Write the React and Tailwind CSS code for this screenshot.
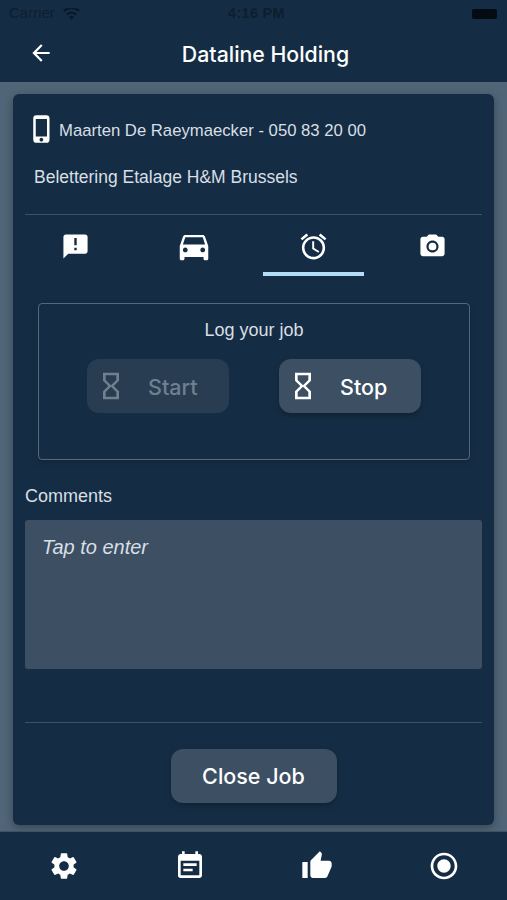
import { MdArrowBack, MdPhoneIphone, MdAnnouncement, MdDirectionsCar, MdAccessAlarm, MdPhotoCamera, MdHourglassEmpty, MdSettings, MdEventNote, MdThumbUp, MdRadioButtonChecked } from 'react-icons/md';

const tabs = [
  { Icon: MdAnnouncement, size: 29 },
  { Icon: MdDirectionsCar, size: 38 },
  { Icon: MdAccessAlarm, size: 31, active: true },
  { Icon: MdPhotoCamera, size: 29 },
];

const navItems = [MdSettings, MdEventNote, MdThumbUp, MdRadioButtonChecked];

function LogButton({ label, disabled }) {
  return (
    <div
      className={`w-[142px] h-[54px] rounded-xl flex items-center pl-[10px] ${
        disabled ? 'bg-[#283d51] text-[#6f8090]' : 'bg-[#3c4f63] text-white shadow-[0_3px_6px_rgba(0,0,0,0.25)]'
      }`}
    >
      <MdHourglassEmpty size={32} className="-ml-[2px] shrink-0" />
      <span className="ml-[21px] pt-[3px] text-[21.500px] font-medium font-['Inter',sans-serif]">{label}</span>
    </div>
  );
}

export default function App() {
  return (
    <div className="w-[507px] h-[900px] flex flex-col bg-[#506577] overflow-hidden font-['Liberation_Sans',sans-serif]">
      {/* Status + header */}
      <div className="h-[82px] shrink-0 bg-[#152d44]">
        <div className="h-[27px] flex items-center justify-between pl-[9px] pr-[10px] text-[#0b1a28]">
          <div className="flex items-center gap-[8px] w-[127px]">
            <span className="text-[15px] text-[#0b1a28]/80">Carrier</span>
            <svg width="17" height="12" viewBox="0 0 17 12" fill="currentColor">
              <path d="M8.5 12 5.9 8.9a4 4 0 0 1 5.2 0zM4.6 7.4 3 5.5a8.500 8.500 0 0 1 11 0l-1.600 1.900a6 6 0 0 0-7.800 0zM1.600 3.900 0 2a13 13 0 0 1 17 0l-1.600 1.900a10.500 10.500 0 0 0-13.800 0z" />
            </svg>
          </div>
          <span className="text-[14.500px] font-bold tracking-[0.3px] text-[#0b1a28]/80">4:16 PM</span>
          <div className="w-[120px] flex justify-end">
            <div className="w-[25px] h-[10px] rounded-[2px] bg-[#050b12]" />
          </div>
        </div>
        <div className="relative h-[55px] flex items-center justify-center pl-[24px]">
          <MdArrowBack size={26} className="absolute left-[28px] top-[13px] text-white" />
          <span className="text-[21.300px] font-medium font-['Inter',sans-serif] text-white">Dataline Holding</span>
        </div>
      </div>

      {/* Card */}
      <div className="flex-1 px-[13px] pt-[12px] pb-[6px] min-h-0">
        <div className="h-full rounded-[6px] bg-[#152d44] shadow-[0_3px_8px_rgba(0,0,0,0.3)] px-[12px] flex flex-col">
          <div className="flex items-center h-[32px] mt-[20px] text-[#d8dfe5]">
            <MdPhoneIphone size={30} className="ml-[2px] -mt-[2px] text-white shrink-0" />
            <span className="text-[16.700px] ml-[2px] pt-[2px]">Maarten De Raeymaecker - 050 83 20 00</span>
          </div>
          <div className="text-[17.500px] text-[#d8dfe5] ml-[9px] mt-[20px] leading-[22px]">Belettering Etalage H&amp;M Brussels</div>

          <div className="h-px bg-[#3b5267] mt-[26px]" />

          <div className="grid grid-cols-4 h-[61px] -mx-[9.5px]">
            {tabs.map(({ Icon, size, active }, i) => (
              <div key={i} className="relative flex justify-center pt-[15px] text-white">
                <div className="h-[32px] flex items-center"><Icon size={size} /></div>
                {active && <div className="absolute bottom-0 left-[9.500px] w-[101px] h-[4px] bg-[#b3dcf6]" />}
              </div>
            ))}
          </div>

          <div className="ml-[13px] mr-[12px] mt-[27px] h-[157px] rounded-[4px] border border-[#54697d] shadow-[0_3px_6px_rgba(0,0,0,0.2)] pt-[16px]">
            <div className="text-center text-[18px] text-[#d8dfe5] leading-[21px]">Log your job</div>
            <div className="flex justify-center gap-[50px] mt-[18px]">
              <LogButton label="Start" disabled />
              <LogButton label="Stop" />
            </div>
          </div>

          <div className="text-[18px] text-[#d8dfe5] mt-[26px] leading-[21px]">Comments</div>
          <div className="h-[149px] mt-[13px] rounded-[3px] bg-[#3c4f63] px-[17px] pt-[15px] text-[20px] italic text-[#d8dfe5] leading-[24px]">
            Tap to enter
          </div>

          <div className="h-px bg-[#3b5267] mt-[53px]" />

          <div className="flex justify-center mt-[26px]">
            <div className="w-[166px] h-[54px] rounded-xl bg-[#3c4f63] shadow-[0_3px_6px_rgba(0,0,0,0.25)] flex items-center justify-center text-[21.500px] font-medium font-['Inter',sans-serif] text-white">
              Close Job
            </div>
          </div>
        </div>
      </div>

      {/* Bottom nav */}
      <div className="h-[69px] shrink-0 bg-[#152d44] border-t border-[#3b5267] grid grid-cols-4 pt-[18px]">
        {navItems.map((Icon, i) => (
          <div key={i} className="flex justify-center text-white"><Icon size={32} className={i === 0 ? 'ml-[2px]' : ''} /></div>
        ))}
      </div>
    </div>
  );
}
